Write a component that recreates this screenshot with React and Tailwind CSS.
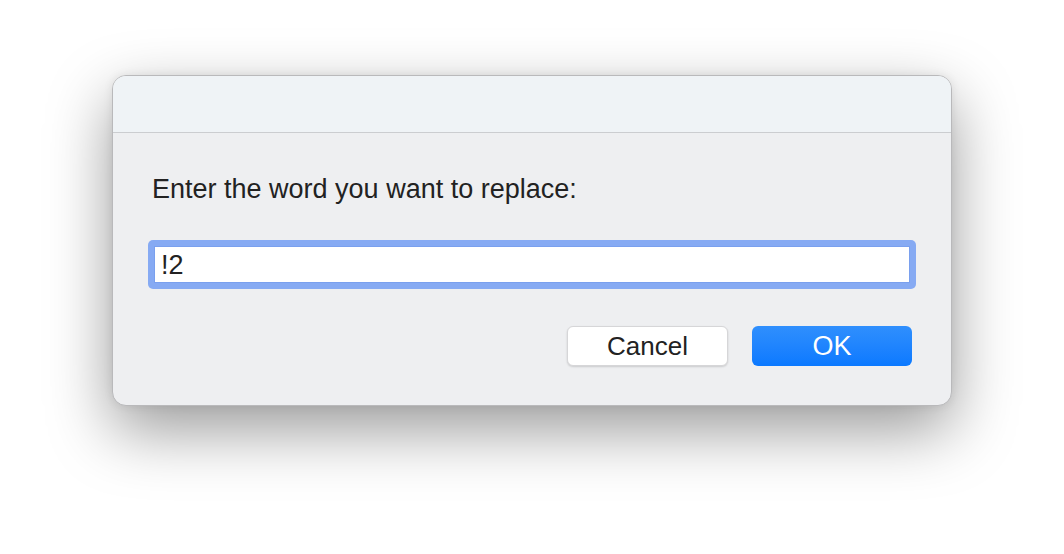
export default function App() {
  return (
    <div className="w-[1064px] h-[554px] bg-white pt-[75px] font-['Liberation_Sans',Arial,sans-serif] text-[#222]">
      <div className="mx-auto w-[840px] rounded-[14px] border border-[#b9b9bb] bg-[#eeeff1] shadow-[0_24px_64px_rgba(0,0,0,0.4),0_0_10px_rgba(0,0,0,0.08)] overflow-hidden">
        <div className="h-[57px] bg-[#eff3f6] border-b border-[#cbcdd0]" />
        <div className="px-[35px] pt-[41px] pb-[39px]">
          <p className="px-[4px] text-[27px] leading-[30px]">Enter the word you want to replace:</p>
          <div className="mt-[36px] rounded-[5px] bg-[#86aaf3] p-[6px]">
            <div className="h-[37px] bg-white border border-[#7aa0ee] pl-[6px] text-[27px] leading-[36px]">!2</div>
          </div>
          <div className="mt-[37px] flex justify-end gap-[24px] pr-[4px]">
            <button className="w-[161px] h-[40px] rounded-[6px] bg-white border border-[#d6d6d8] shadow-[0_1px_2px_rgba(0,0,0,0.15)] text-[26px] leading-none">
              Cancel
            </button>
            <button className="w-[160px] h-[40px] rounded-[6px] bg-linear-to-b from-[#2f8ffd] to-[#0a79ff] text-white text-[27px] leading-none">
              OK
            </button>
          </div>
        </div>
      </div>
    </div>
  );
}
